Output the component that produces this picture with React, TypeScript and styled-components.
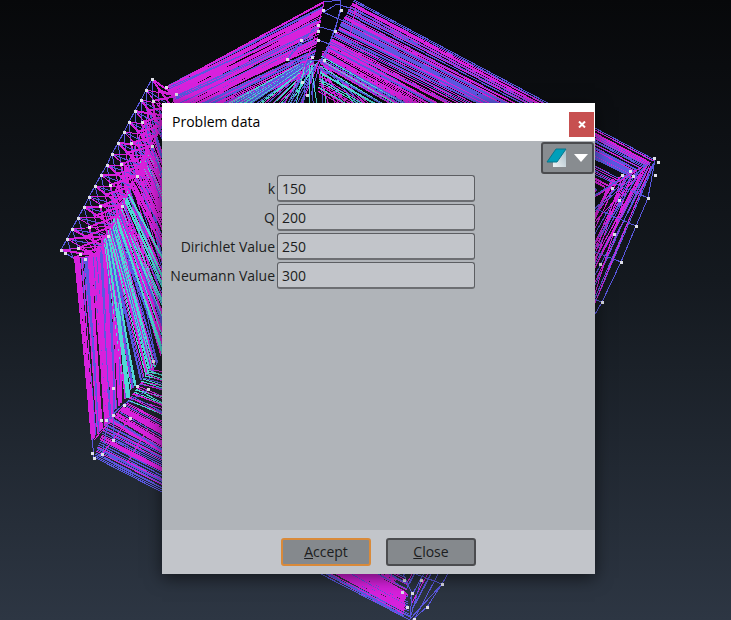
import React from 'react';
import styled, { createGlobalStyle } from 'styled-components';

const GlobalStyle = createGlobalStyle`
  *, *::before, *::after { box-sizing: border-box; }
  body { margin: 0; background: #07080a; }
  button, input { font: inherit; color: inherit; }
`;

const Viewport = styled.main`
  position: relative;
  display: grid;
  min-height: 100vh;
  padding: 103px 136px 46px 162px;
  overflow: hidden;
  background: linear-gradient(#07080a, #14191f 45%, #2d3643);
  font-family: 'Open Sans', 'Noto Sans', sans-serif;
  font-size: 14px;
  line-height: 20px;
  color: #1c1d20;
`;

const Scene = styled.svg`
  position: absolute;
  inset: 0;
  width: 100%;
  height: 100%;
`;

const Dialog = styled.section`
  position: relative;
  display: flex;
  flex-direction: column;
  min-width: 0;
  background: #b0b4b9;
  box-shadow: 0 4px 16px rgba(0, 0, 0, 0.55);
`;

const TitleBar = styled.header`
  display: flex;
  align-items: center;
  justify-content: space-between;
  height: 38px;
  padding: 4px 1px 0 10px;
  background: #fff;
  color: #000;
`;

const Title = styled.h1`
  margin: 0;
  padding-bottom: 4px;
  font-size: 14px;
  font-weight: 400;
`;

const DismissButton = styled.button`
  display: grid;
  place-items: center;
  width: 25px;
  height: 25px;
  padding: 0;
  margin-top: 1px;
  border: 0;
  background: #c75050;
`;

const Toolbar = styled.div`
  display: flex;
  justify-content: flex-end;
  padding: 1px 1px 0;
`;

const MenuButton = styled.button`
  display: flex;
  align-items: center;
  justify-content: center;
  width: 53px;
  height: 32px;
  padding: 0;
  border: 2px solid #4b4c4f;
  border-radius: 3px;
  background: #888c90;
`;

const Fields = styled.form`
  display: grid;
  grid-template-columns: 113px minmax(0, 198px);
  gap: 2px;
  flex: 1;
  align-content: start;
  align-items: center;
  padding: 1px 0 0;
`;

const FieldLabel = styled.label`
  text-align: right;
  white-space: nowrap;
`;

const FieldInput = styled.input`
  width: 100%;
  height: 27px;
  padding: 0 4px;
  border: 1px solid #5c5e62;
  border-bottom: 2px solid #6c6e72;
  border-radius: 3px;
  background: #c2c5ca;
  outline: none;
`;

const Footer = styled.footer`
  display: flex;
  justify-content: center;
  gap: 15px;
  padding: 8px 0;
  background: #c2c5ca;
`;

const ActionButton = styled.button<{ $primary?: boolean }>`
  width: 90px;
  height: 28px;
  padding: 0;
  border: 2px solid ${(p) => (p.$primary ? '#d98a3a' : '#4b4c4f')};
  border-radius: 3px;
  background: #85898d;
`;

type Point = [number, number];
type Edge = [Point, Point];
type Segment = { a: Point; b: Point; color: string; bold?: boolean };

const MAGENTA = '#d721dc';
const BLUE = '#5a58e0';
const CYAN = '#4fd9d4';

const createRandom = (seed: number) => {
  let state = seed;
  return () => {
    state = (state * 1664525 + 1013904223) % 4294967296;
    return state / 4294967296;
  };
};

const along = ([p, q]: Edge, t: number): Point => [
  Math.round(p[0] + (q[0] - p[0]) * t),
  Math.round(p[1] + (q[1] - p[1]) * t),
];

const random = createRandom(41);

// Strings mesh lines between two edges; spread lets a line drift from its partner.
const strand = (
  from: Edge,
  to: Edge,
  count: number,
  spread: number,
  colors: string[],
  boldShare = 0,
): Segment[] =>
  Array.from({ length: count }, (_, i) => {
    const t = (i + random() * 0.6) / count;
    const u = Math.min(1, Math.max(0, t + (random() - 0.5) * spread));
    return {
      a: along(from, t),
      b: along(to, u),
      color: colors[Math.floor(random() * colors.length)],
      bold: random() < boldShare,
    };
  });

const chain = (points: Point[], color: string): Segment[] =>
  points.slice(1).map((b, i) => ({ a: points[i], b, color }));

const mostlyMagenta = [MAGENTA, MAGENTA, MAGENTA, BLUE];
const mixed = [MAGENTA, BLUE];

const finOuter: Point[] = Array.from({ length: 17 }, (_, i) => along([[152, 79], [61, 250]], i / 16));
const finMiddle: Point[] = Array.from({ length: 17 }, (_, i) => along([[158, 90], [73, 258]], i / 16));
const finInner: Point[] = Array.from({ length: 17 }, (_, i) => along([[176, 96], [98, 256]], i / 16));

const finMesh: Segment[] = finOuter.flatMap((p, i) => {
  const next = Math.min(16, i + 1);
  const prev = Math.max(0, i - 1);
  return [
    { a: p, b: finInner[i], color: BLUE },
    { a: p, b: finInner[next], color: MAGENTA, bold: i % 2 === 0 },
    { a: p, b: finInner[prev], color: MAGENTA, bold: i % 3 === 0 },
    { a: p, b: finMiddle[next], color: BLUE },
    { a: finMiddle[i], b: finInner[prev], color: MAGENTA, bold: true },
    { a: finMiddle[i], b: finInner[Math.min(16, i + 3)], color: MAGENTA, bold: i % 2 === 1 },
  ];
});

const segments: Segment[] = [
  // Upper left face
  ...strand([[168, 86], [185, 128]], [[324, 2], [312, 72]], 54, 0.14, mostlyMagenta, 0.45),
  ...strand([[168, 86], [178, 110]], [[318, 16], [310, 50]], 22, 0.3, mixed),
  ...strand([[205, 116], [225, 122]], [[300, 64], [316, 60]], 12, 0.3, [CYAN, CYAN, BLUE], 0.3),
  ...strand([[235, 118], [300, 118]], [[304, 70], [322, 60]], 16, 0.3, [CYAN, BLUE, MAGENTA]),
  ...strand([[275, 118], [390, 118]], [[305, 65], [330, 66]], 22, 0.5, [CYAN, BLUE, MAGENTA]),
  // Upper right face
  ...strand([[354, 0], [337, 31]], [[655, 160], [626, 176]], 26, 0.14, mixed, 0.25),
  ...strand([[337, 31], [318, 62]], [[632, 176], [560, 206]], 26, 0.16, mostlyMagenta, 0.5),
  ...strand([[322, 50], [318, 92]], [[500, 150], [480, 190]], 22, 0.2, [CYAN, BLUE, MAGENTA]),
  // Side face below the fin
  ...strand([[150, 110], [104, 215]], [[200, 265], [150, 380]], 56, 0.5, mixed, 0.1),
  ...strand([[74, 258], [106, 254]], [[92, 440], [112, 418]], 26, 0.2, mostlyMagenta, 0.6),
  ...strand([[92, 256], [120, 215]], [[106, 420], [126, 398]], 30, 0.3, mostlyMagenta, 0.4),
  ...strand([[104, 240], [118, 210]], [[125, 396], [182, 340]], 38, 0.2, [MAGENTA, BLUE, CYAN], 0.3),
  ...strand([[112, 222], [128, 190]], [[150, 370], [200, 320]], 24, 0.2, [CYAN, CYAN, BLUE, MAGENTA], 0.3),
  ...strand([[130, 185], [150, 140]], [[190, 300], [200, 240]], 26, 0.3, [CYAN, BLUE, MAGENTA, MAGENTA], 0.2),
  ...strand([[140, 165], [160, 110]], [[180, 250], [180, 150]], 30, 0.7, mostlyMagenta, 0.2),
  ...strand([[120, 330], [118, 300]], [[126, 398], [130, 398]], 5, 0.2, [CYAN], 0.6),
  // Lower face
  ...strand([[94, 458], [107, 418]], [[410, 620], [405, 570]], 26, 0.12, mixed, 0.25),
  ...strand([[109, 420], [128, 402]], [[390, 594], [410, 550]], 18, 0.2, mostlyMagenta, 0.25),
  ...strand([[127, 402], [150, 368]], [[190, 430], [190, 375]], 24, 0.3, [CYAN, BLUE, MAGENTA]),
  ...strand([[162, 485], [162, 450]], [[404, 616], [406, 592]], 22, 0.2, mostlyMagenta, 0.5),
  // Right hand face
  ...strand([[655, 161], [626, 177]], [[415, 620], [402, 570]], 9, 0.3, mixed),
  ...strand([[655, 162], [640, 175]], [[595, 315], [580, 285]], 8, 0.5, mostlyMagenta, 0.2),
  ...strand([[632, 172], [610, 180]], [[590, 310], [570, 230]], 10, 0.5, mostlyMagenta, 0.2),
  ...strand([[632, 172], [654, 160]], [[580, 200], [600, 240]], 7, 0.8, mixed),
  ...chain([[655, 160], [648, 198], [636, 226], [621, 262], [602, 302], [442, 584], [427, 607], [412, 620]], BLUE),
  ...chain([[648, 198], [580, 168]], BLUE),
  ...chain([[636, 226], [575, 200]], BLUE),
  ...chain([[621, 262], [570, 242]], BLUE),
  ...chain([[602, 302], [570, 290]], BLUE),
  // Struts at the top
  ...chain([[324, 2], [340, 0], [340, 10], [335, 31], [316, 26], [287, 60], [324, 60], [341, 10]], BLUE),
  ...chain([[324, 3], [314, 40], [299, 80]], MAGENTA),
  ...chain([[324, 12], [337, 4], [356, 10], [420, 46]], BLUE),
  ...chain([[323, 12], [341, 20], [400, 50]], BLUE),
  ...chain([[357, 2], [350, 36]], MAGENTA),
  ...chain([[316, 28], [301, 40], [286, 61]], BLUE),
  ...chain([[318, 40], [335, 46], [400, 82]], BLUE),
  ...chain([[335, 31], [320, 64], [311, 95]], BLUE),
  // Struts at the lower left
  ...chain([[92, 438], [94, 458], [102, 454], [109, 418], [124, 404], [148, 390]], BLUE),
  ...chain([[94, 440], [124, 406], [130, 418], [113, 440], [102, 454]], MAGENTA),
  ...chain([[113, 385], [113, 440], [162, 466]], BLUE),
  ...chain([[148, 428], [128, 462]], MAGENTA),
  // Struts at the bottom
  ...chain([[403, 574], [412, 593], [410, 619]], BLUE),
  ...chain([[421, 580], [410, 619], [442, 584], [400, 568]], BLUE),
  ...chain([[391, 574], [391, 604]], MAGENTA),
  ...finMesh,
  ...chain(finOuter, BLUE),
  ...chain(finInner, MAGENTA),
];

const nodes: Point[] = [
  ...finOuter,
  ...finMiddle.filter((_, i) => i % 2 === 1),
  ...finInner.filter((_, i) => i % 3 === 2),
  [166, 87], [176, 94], [65, 253], [80, 254], [85, 259],
  [323, 10], [341, 10], [335, 31], [318, 25], [318, 31], [301, 40], [318, 40],
  [287, 59], [312, 57], [324, 60], [302, 82], [307, 95],
  [654, 158], [658, 162], [655, 175], [648, 198], [636, 226], [621, 262], [602, 302],
  [630, 171], [622, 175], [633, 176], [612, 188], [619, 200], [614, 234], [600, 264],
  [94, 458], [92, 453], [102, 454], [101, 420], [106, 420], [113, 415], [113, 388],
  [124, 405], [130, 418], [113, 440], [148, 389], [137, 386], [153, 361],
  [404, 580], [421, 580], [442, 584], [412, 593], [427, 607], [407, 607], [402, 592], [414, 619],
];

const fields = [
  { id: 'k', label: 'k', value: '150' },
  { id: 'q', label: 'Q', value: '200' },
  { id: 'dirichlet', label: 'Dirichlet Value', value: '250' },
  { id: 'neumann', label: 'Neumann Value', value: '300' },
];

const WireframeScene = () => (
  <Scene viewBox="0 0 731 620" preserveAspectRatio="xMidYMid slice" shapeRendering="crispEdges" aria-hidden="true">
    {segments.map(({ a, b, color, bold }, i) => (
      <line key={i} x1={a[0]} y1={a[1]} x2={b[0]} y2={b[1]} stroke={color} strokeWidth={bold ? 2 : 1} />
    ))}
    {nodes.map(([x, y], i) => (
      <rect key={i} x={x - 1} y={y - 1} width="3" height="3" fill="#dedfe8" />
    ))}
  </Scene>
);

const EraserIcon = () => (
  <svg width="44" height="24" viewBox="0 0 44 24" aria-hidden="true">
    <defs>
      <linearGradient id="sheet" x1="0" y1="1" x2="1" y2="0">
        <stop offset="0" stopColor="#f1f5f7" />
        <stop offset="1" stopColor="#a7bcc7" />
      </linearGradient>
    </defs>
    <path d="M7 10 20 4V21H7Z" fill="url(#sheet)" />
    <path d="M10 3H20L11 16H1Z" fill="#009fba" stroke="#08778c" />
    <path d="M28 8H42L35 16Z" fill="#fff" />
  </svg>
);

export default function App() {
  return (
    <Viewport>
      <GlobalStyle />
      <WireframeScene />
      <Dialog role="dialog" aria-labelledby="dialog-title">
        <TitleBar>
          <Title id="dialog-title">Problem data</Title>
          <DismissButton type="button" aria-label="Close dialog">
            <svg width="8" height="7" viewBox="0 0 8 7" aria-hidden="true">
              <path d="M1 .5 7 6.5M7 .5 1 6.5" stroke="#fff" strokeWidth="2" />
            </svg>
          </DismissButton>
        </TitleBar>
        <Toolbar>
          <MenuButton type="button" aria-label="Clear values" aria-haspopup="menu">
            <EraserIcon />
          </MenuButton>
        </Toolbar>
        <Fields id="problem-form" onSubmit={(event) => event.preventDefault()}>
          {fields.map(({ id, label, value }) => (
            <React.Fragment key={id}>
              <FieldLabel htmlFor={id}>{label}</FieldLabel>
              <FieldInput id={id} type="text" defaultValue={value} />
            </React.Fragment>
          ))}
        </Fields>
        <Footer>
          <ActionButton type="submit" form="problem-form" $primary>
            <u>A</u>ccept
          </ActionButton>
          <ActionButton type="button">
            <u>C</u>lose
          </ActionButton>
        </Footer>
      </Dialog>
    </Viewport>
  );
}
